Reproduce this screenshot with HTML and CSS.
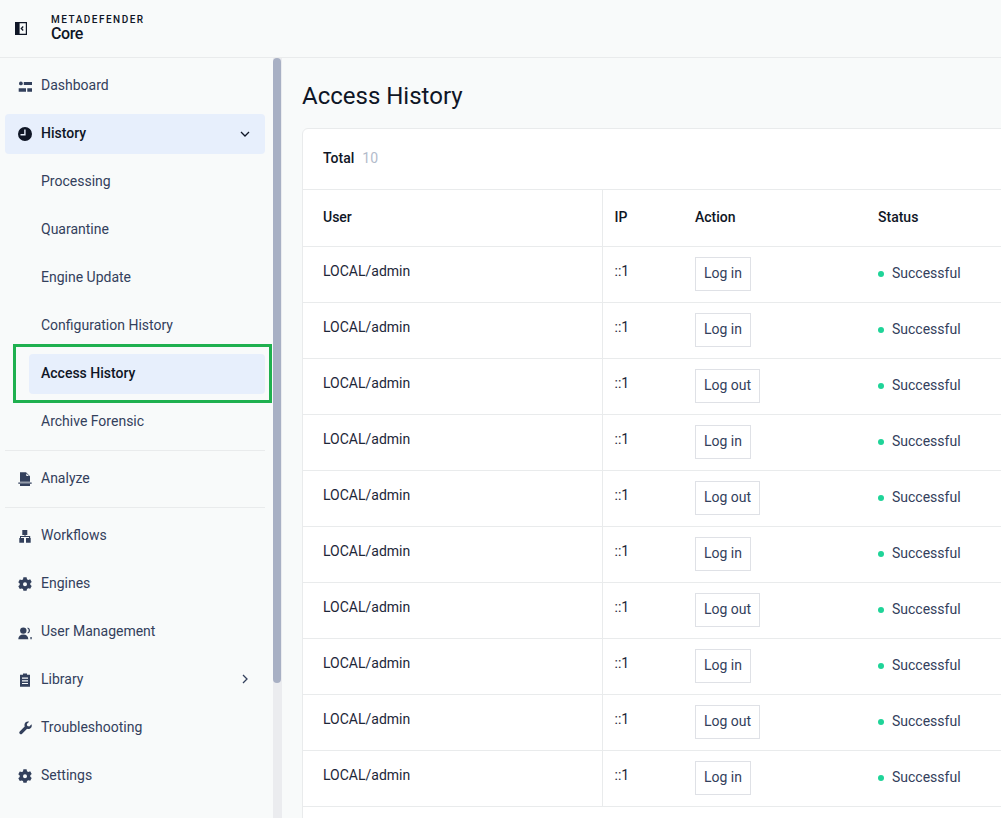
FILE: index.html
```html
<!DOCTYPE html>
<html lang="en">
<head>
<meta charset="utf-8">
<title>Access History</title>
<link rel="stylesheet" href="styles.css">
</head>
<body>
<header class="topbar">
  <svg class="collapse" width="12" height="13" viewBox="0 0 12 13"><path d="M0 0h4v13H0z" fill="#0f1626"/><path d="M4 .6h7.400v11.800H4z" fill="none" stroke="#0f1626" stroke-width="1.200"/><path d="M8.200 4.500 6.300 6.500l1.900 2" fill="none" stroke="#0f1626" stroke-width="1.300"/></svg>
  <div class="brand"><div class="brand-top">METADEFENDER</div><div class="brand-name">Core</div></div>
</header>
<div class="shell">
  <aside class="sidebar">
    <nav class="nav">
      <a class="item"><svg class="ico" viewBox="0 0 14 16"><circle cx="2.900" cy="5.400" r="1.900"/><path d="M5.800 4H14v3H5.800zM.7 10.300H8v3.400H.7zM9.300 10.300H14v3.400H9.300z"/></svg>Dashboard</a>
      <a class="item active-parent"><svg class="ico dark" viewBox="0 0 14 16"><path fill-rule="evenodd" d="M7 1a7 7 0 1 1 0 14A7 7 0 0 1 7 1zm.6 2.500H6.200v4.600H2.500v1.400h5.100z"/></svg>History<svg class="chev" width="12" height="12" viewBox="0 0 12 12"><path d="M2 4l4 4 4-4" fill="none" stroke="#0f1626" stroke-width="1.300"/></svg></a>
      <a class="item sub">Processing</a>
      <a class="item sub">Quarantine</a>
      <a class="item sub">Engine Update</a>
      <a class="item sub">Configuration History</a>
      <a class="item sub current">Access History</a>
      <a class="item sub">Archive Forensic</a>
      <div class="rule"></div>
      <a class="item"><svg class="ico" viewBox="0 0 14 16"><path fill-rule="evenodd" d="M2 2.300h6l4 4v5.500H2zM8.300 3.400v2.700H11z"/><path d="M.3 12.400h13.400v1.300H.3zM2 14.100h10V16H2z"/></svg>Analyze</a>
      <div class="rule"></div>
      <a class="item"><svg class="ico" viewBox="0 0 14 16"><path d="M4.300 3h5v5H7.500v1h4.700v2h.5v4.700H8V11h3V10H3v1h3v4.700H1.300V11h.7V9h4.500V8H4.300z"/></svg>Workflows</a>
      <a class="item"><svg class="ico" viewBox="0 0 14 16"><path fill-rule="evenodd" transform="translate(0 2.300)" d="M5.400 0h3.200l.4 1.900 1.300.7 1.900-.6 1.500 2.700-1.400 1.300v1.500l1.400 1.300-1.500 2.700-1.900-.6-1.300.7-.4 1.900H5.400L5 11.800l-1.300-.7-1.900.6L.3 9l1.400-1.300V6.200L.3 4.900 1.800 2.200l1.900.6L5 2.100zM7 5a2 2 0 1 0 0 4 2 2 0 0 0 0-4z"/></svg>Engines</a>
      <a class="item"><svg class="ico" viewBox="0 0 14 16"><circle cx="5.300" cy="7.600" r="3.200"/><path d="M.3 16.300c0-3 2-4.800 5-4.800s5 1.800 5 4.800z"/><path d="M9.600 4.600c1.500.3 2.400 1.500 2.400 3s-.9 2.600-2.200 2.900l-.4-.8c.8-.4 1.300-1.200 1.300-2.100 0-.9-.5-1.700-1.300-2.100zM12.400 14h1.300v2.300h-1.300z"/></svg>User Management</a>
      <a class="item"><svg class="ico" viewBox="0 0 14 16"><path fill-rule="evenodd" d="M5 2.500h4v1.200h3v12H2v-12h3zM4 6.500v1.200h6V6.500zM4 9.200v1.200h6V9.200zM4 11.900v1.200h6v-1.200z"/></svg>Library<svg class="chev" width="12" height="12" viewBox="0 0 12 12"><path d="M4 2l4 4-4 4" fill="none" stroke="#33405c" stroke-width="1.300"/></svg></a>
      <a class="item"><svg class="ico" viewBox="0 0 14 16"><path d="M13.500 5.200 11.300 7.400l-2-.4-.5-2 2.300-2.300C8.900 2 6.800 3.400 6.500 5.500c-.1.700 0 1.300.2 1.900l-5 5a1.700 1.700 0 0 0 2.400 2.400l5-5c2.600.8 5.600-1.400 4.400-4.600z"/></svg>Troubleshooting</a>
      <a class="item"><svg class="ico" viewBox="0 0 14 16"><path fill-rule="evenodd" transform="translate(0 2.300)" d="M5.400 0h3.200l.4 1.900 1.300.7 1.900-.6 1.500 2.700-1.400 1.300v1.500l1.400 1.300-1.500 2.700-1.900-.6-1.300.7-.4 1.900H5.400L5 11.800l-1.300-.7-1.900.6L.3 9l1.400-1.300V6.200L.3 4.900 1.800 2.200l1.900.6L5 2.100zM7 5a2 2 0 1 0 0 4 2 2 0 0 0 0-4z"/></svg>Settings</a>
    </nav>
    <div class="highlight"></div>
    <div class="scroll-track"><div class="scroll-thumb"></div></div>
  </aside>
  <main class="main">
    <h1 class="title">Access History</h1>
    <section class="card">
      <div class="total"><b>Total</b><span>10</span></div>
      <table class="table">
        <colgroup><col class="c-user"><col class="c-ip"><col class="c-action"><col class="c-status"><col></colgroup>
        <thead><tr><th class="first">User</th><th>IP</th><th>Action</th><th>Status</th><th></th></tr></thead>
        <tbody>
          <tr><td class="first">LOCAL/admin</td><td class="ip">::1</td><td><span class="tag">Log in</span></td><td class="state"><span class="ok">Successful</span></td><td></td></tr>
          <tr><td class="first">LOCAL/admin</td><td class="ip">::1</td><td><span class="tag">Log in</span></td><td class="state"><span class="ok">Successful</span></td><td></td></tr>
          <tr><td class="first">LOCAL/admin</td><td class="ip">::1</td><td><span class="tag">Log out</span></td><td class="state"><span class="ok">Successful</span></td><td></td></tr>
          <tr><td class="first">LOCAL/admin</td><td class="ip">::1</td><td><span class="tag">Log in</span></td><td class="state"><span class="ok">Successful</span></td><td></td></tr>
          <tr><td class="first">LOCAL/admin</td><td class="ip">::1</td><td><span class="tag">Log out</span></td><td class="state"><span class="ok">Successful</span></td><td></td></tr>
          <tr><td class="first">LOCAL/admin</td><td class="ip">::1</td><td><span class="tag">Log in</span></td><td class="state"><span class="ok">Successful</span></td><td></td></tr>
          <tr><td class="first">LOCAL/admin</td><td class="ip">::1</td><td><span class="tag">Log out</span></td><td class="state"><span class="ok">Successful</span></td><td></td></tr>
          <tr><td class="first">LOCAL/admin</td><td class="ip">::1</td><td><span class="tag">Log in</span></td><td class="state"><span class="ok">Successful</span></td><td></td></tr>
          <tr><td class="first">LOCAL/admin</td><td class="ip">::1</td><td><span class="tag">Log out</span></td><td class="state"><span class="ok">Successful</span></td><td></td></tr>
          <tr><td class="first">LOCAL/admin</td><td class="ip">::1</td><td><span class="tag">Log in</span></td><td class="state"><span class="ok">Successful</span></td><td></td></tr>
        </tbody>
      </table>
    </section>
  </main>
</div>
</body>
</html>
```

FILE: styles.css
```css
* { box-sizing: border-box; }
html, body { margin: 0; height: 100%; overflow: hidden; }
body {
  background: #f8fafa;
  font-family: Roboto, "Liberation Sans", sans-serif;
  font-size: 14px;
  color: #33405c;
}
.topbar {
  height: 58px;
  border-bottom: 1px solid #e9ebec;
  display: flex;
  align-items: center;
  padding-left: 15px;
}
.collapse { display: block; margin-right: 24px; }
.brand { color: #0f1626; padding-bottom: 1px; }
.brand-top { font-size: 10px; line-height: 11px; letter-spacing: 1.5px; font-weight: 500; }
.brand-name { font-size: 16px; line-height: 18px; font-weight: 500; letter-spacing: -0.4px; }
.shell { display: flex; height: 760px; }
.sidebar { width: 282px; flex: none; position: relative; padding: 8px 17px 0 5px; }
.nav { display: flex; flex-direction: column; }
.item {
  height: 40px;
  margin-bottom: 8px;
  display: flex;
  align-items: center;
  padding: 0 0 3px 13px;
  border-radius: 4px;
  line-height: 40px;
}
.ico { width: 14px; height: 16px; fill: #33405c; margin-right: 9px; flex: none; position: relative; top: 1.5px; overflow: visible; }
.rule ~ .item .ico { top: .5px; }
.ico.dark { fill: #0f1626; }
.chev { margin-left: auto; margin-right: 14px; position: relative; top: 1.5px; }
.rule ~ .item .chev { top: .5px; }
.active-parent { background: #e7effc; color: #0f1626; font-weight: 500; }
.sub { margin-left: 24px; padding-left: 12px; }
.current { background: #e7effc; color: #0f1626; font-weight: 500; }
.rule { height: 1px; background: #e9ebec; margin-bottom: 8px; }
.highlight {
  position: absolute;
  left: 13px;
  top: 286px;
  width: 259px;
  height: 59px;
  border: 3px solid #1fb04f;
}
.scroll-track { position: absolute; top: 0; right: 0; bottom: 0; width: 9px; background: #ebecef; }
.scroll-thumb { width: 8px; height: 625px; background: #a8b0c4; border-radius: 4px; }
.main { flex: 1; min-width: 0; padding: 20px 0 0 20px; overflow: hidden; }
.title { margin: 0 0 18px; font-size: 24px; line-height: 32px; font-weight: 400; color: #0f1626; height: 32px; transform: translateY(2px); }
.card { width: 900px; background: #fff; border: 1px solid #e9ebec; border-radius: 6px 0 0 0; height: 720px; }
.total { height: 61px; display: flex; align-items: center; gap: 8px; padding: 0 0 3px 20px; border-bottom: 1px solid #e9ebec; color: #0f1626; }
.total b { font-weight: 500; }
.total span { color: #b3bbcb; }
.table { border-collapse: collapse; table-layout: fixed; width: 100%; }
.c-user { width: 299px; }
.c-ip { width: 81px; }
.c-action { width: 183px; }
.c-status { width: 200px; }
.table th, .table td { padding: 0 12px; text-align: left; border-bottom: 1px solid #e9ebec; }
.table th { height: 56px; padding-bottom: 1px; font-weight: 500; color: #0f1626; }
.table td { height: 56px; }
.table th.first, .table td.first { padding-left: 20px; border-right: 1px solid #e9ebec; }
.table td.first, .table td.ip { padding-bottom: 6px; color: #1d2639; }
.table td.state { padding-bottom: 4px; }
.tag {
  display: inline-block;
  height: 34px;
  line-height: 30px;
  padding: 0 8px;
  border: 1px solid #dfe1e6;
  vertical-align: middle;
}
.ok { display: inline-flex; align-items: center; }
.ok::before { content: ""; width: 6px; height: 6px; border-radius: 50%; background: #1fd498; margin-right: 8px; position: relative; top: 1px; }
```
